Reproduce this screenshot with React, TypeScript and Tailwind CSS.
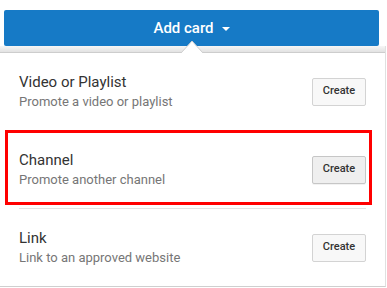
import React from 'react';

interface CardOption {
  title: string;
  subtitle: string;
  active?: boolean;
}

const options: CardOption[] = [
  { title: 'Video or Playlist', subtitle: 'Promote a video or playlist' },
  { title: 'Channel', subtitle: 'Promote another channel', active: true },
  { title: 'Link', subtitle: 'Link to an approved website' },
];

const OptionRow: React.FC<{ option: CardOption; last: boolean }> = ({ option, last }) => (
  <div className="px-[19px]">
    <div className="flex items-center justify-between h-[77px]">
      <div className="flex flex-col">
        <span className="text-[15px] leading-[20px] text-[#333333]">{option.title}</span>
        <span className="text-[13px] leading-[18px] mt-px text-[#767676]">{option.subtitle}</span>
      </div>
      <button
        type="button"
        className={`w-[54px] h-[28px] rounded-[2px] border text-[11px] font-medium text-[#333333] ${
          option.active
            ? 'bg-[#efefef] border-[#c6c6c6] shadow-[0_1px_0_rgba(0,0,0,0.05)]'
            : 'bg-[#f8f8f8] border-[#d3d3d3]'
        }`}
      >
        Create
      </button>
    </div>
    {!last && <div className="h-px bg-[#e2e2e2]" />}
  </div>
);

export default function App() {
  return (
    <div className="relative w-[387px] h-[288px] bg-white overflow-hidden font-['Roboto',sans-serif]">
      <div className="pt-[10px] pl-1 pr-2">
        <button
          type="button"
          className="w-full h-9 rounded-[2px] bg-[#167ac6] text-white text-[15px] font-medium flex items-center justify-center gap-2"
        >
          <span>Add card</span>
          <svg width="8" height="4" viewBox="0 0 8 4" className="mt-px">
            <path d="M0 0 L8 0 L4 4 Z" fill="#ffffff" />
          </svg>
        </button>
      </div>
      <div className="w-[386px] border-r border-[#e0e0e0] border-b border-b-[#cfcfcf]">
        <div className="h-[7px] bg-gradient-to-b from-[#f6f6f6] to-[#e2e2e2] border-b border-[#cdcdcd]" />
        {options.map((o, i) => (
          <OptionRow key={o.title} option={o} last={i === options.length - 1} />
        ))}
      </div>
      {/* pointer notch under the button */}
      <svg className="absolute left-[181px] top-[40px]" width="22" height="14" viewBox="0 0 22 14">
        <path d="M0 13.5 L11 1 L22 13.5 Z" fill="#ffffff" />
        <path d="M0 13 L11 1 L22 13" fill="none" stroke="#d0d0d0" strokeWidth="1" />
      </svg>
      {/* highlight frame */}
      <div className="absolute left-[5px] top-[130px] w-[367px] h-[75px] border-[3px] border-[#ff0000]" />
    </div>
  );
}
